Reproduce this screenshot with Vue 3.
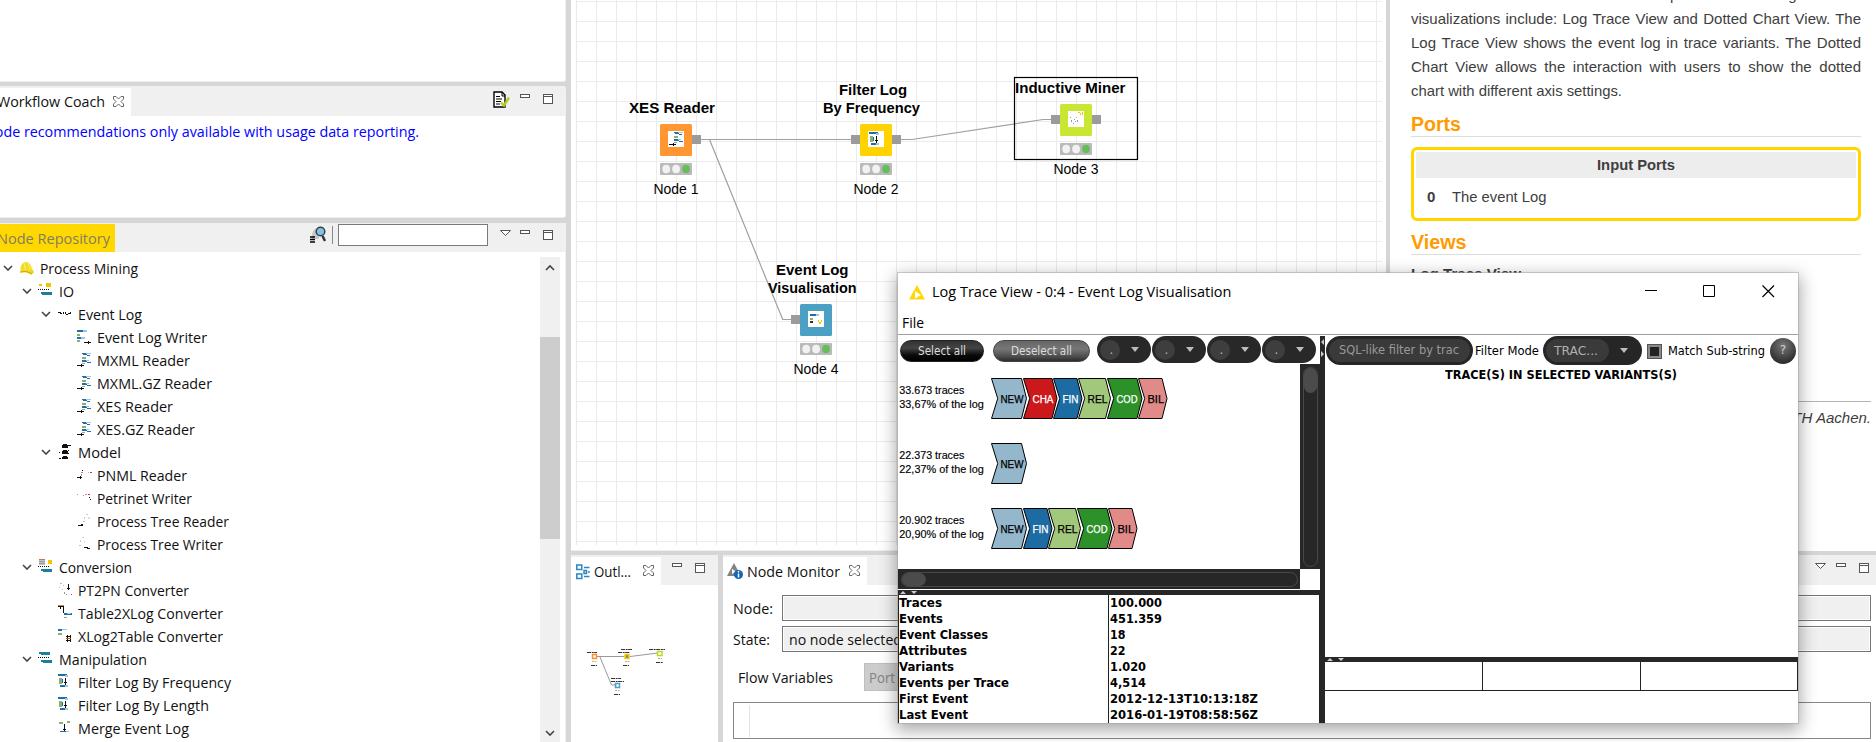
<script setup>
const vFit = {
  mounted(el, { value }) {
    const w = el.getBoundingClientRect().width
    if (!w) return
    el.style.transform = `scaleX(${value / w})`
    el.style.marginRight = `${value - w}px`
  },
}

const B = '#1f6ea8', L = '#9cc8e4', G = '#8fae72', K = '#111', T = '#1c7f9c', Y = '#f5c400', A = '#999', R = '#d33'
const shift = (list, dx, dy) => list.map(([x, y, w, h, c]) => [x + dx, y + dy, w, h, c])
const bars = [[0, 1, 9, 2, B], [6, 1, 4, 2, L], [0, 5, 3, 2, G], [0, 8, 4, 2, B], [4, 8, 4, 2, L], [0, 11, 3, 2, G]]
const arrowL = [[0, 13, 7, 1, K], [4, 12, 1, 3, K]]
const arrowR = [[7, 13, 7, 1, K], [11, 12, 1, 3, K]]
const reader = [[5, 1, 4, 1, B], [6, 2, 4, 1, B], [9, 1, 5, 1, L], [10, 3, 3, 1, B], [5, 5, 4, 2, G], [5, 8, 5, 2, B], [9, 8, 3, 1, L], [10, 10, 4, 1, B], [5, 11, 3, 1, G], ...arrowL]
const filter = [[0, 0, 9, 2, B], [7, 1, 3, 2, L], [1, 4, 3, 6, G], [4, 5, 1, 4, B], [7, 4, 1, 7, K], [6, 8, 3, 1, K], [2, 11, 5, 2, B], [7, 11, 3, 2, L]]
const icons = {
  io: [[1, 1, 3, 2, Y], [8, 0, 5, 4, Y], ...dots(6), [3, 9, 11, 2, T], [4, 11, 10, 1, T]],
  conv: [[1, 0, 6, 1, '#c87850'], [1, 1, 6, 5, '#c4c4c4'], [1, 2, 6, 1, A], [1, 4, 6, 1, A], [10, 1, 4, 4, Y], ...dots(7), [3, 10, 11, 2, T], [5, 12, 9, 1, T]],
  manip: [[1, 1, 11, 2, T], [3, 3, 9, 1, T], ...dots(6), [3, 9, 11, 2, T], [5, 11, 9, 1, T]],
  log: [[0, 6, 3, 1, K], [2, 7, 2, 1, K], [5, 6, 1, 2, K], [7, 6, 1, 2, K], [8, 8, 2, 1, K], [10, 7, 2, 1, K], [12, 6, 1, 2, K]],
  model: [[5, 0, 4, 1, K], [4, 1, 6, 3, K], [9, 1, 4, 1, K], [5, 6, 4, 1, K], [4, 7, 6, 3, K], [10, 6, 1, 1, K], [1, 8, 1, 1, K], [10, 9, 1, 1, K], [5, 12, 4, 1, K], [4, 13, 6, 2, K], [1, 14, 2, 1, K]],
  writer: [...bars, ...arrowR],
  reader,
  pnr: [[5, 3, 1, 1, K], [4, 5, 2, 1, A], [4, 7, 1, 2, A], [11, 5, 1, 1, '#9c9'], [13, 5, 2, 1, R], [0, 10, 5, 1, K], [3, 9, 1, 3, K]],
  pnw: [[0, 4, 1, 1, '#7c2'], [6, 5, 1, 1, '#8a6'], [8, 4, 2, 1, A], [11, 4, 2, 1, R], [12, 7, 1, 1, K], [13, 9, 1, 1, K]],
  ptr: [[9, 1, 2, 1, '#ccc'], [7, 4, 1, 2, '#ccc'], [11, 4, 2, 2, '#ddd'], [6, 8, 2, 1, '#bbb'], [1, 12, 5, 1, K], [4, 11, 2, 1, K]],
  ptw: [[5, 1, 2, 1, '#ccc'], [3, 4, 1, 2, '#ccc'], [7, 5, 1, 2, '#ddd'], [2, 9, 2, 1, '#bbb'], [7, 11, 4, 1, K], [10, 12, 3, 1, K]],
  pt2: [[2, 1, 2, 1, '#bbb'], [5, 3, 1, 1, '#bbb'], [1, 5, 1, 1, '#bbb'], [4, 7, 1, 1, '#bbb'], [10, 2, 1, 6, K], [9, 6, 3, 1, K], [6, 10, 1, 2, A], [8, 12, 1, 1, A], [13, 12, 1, 1, R]],
  t2x: [[0, 0, 6, 1, '#e0802a'], [0, 1, 6, 1, K], [2, 2, 1, 2, K], [5, 2, 1, 6, K], [6, 8, 8, 2, B], [9, 8, 4, 1, L], [6, 12, 3, 1, G]],
  x2t: [[0, 1, 4, 2, B], [4, 1, 5, 1, L], [0, 5, 4, 2, G], [9, 7, 1, 7, K], [12, 7, 1, 7, K], [8, 8, 5, 1, K], [8, 10, 5, 1, '#a60'], [8, 12, 5, 1, K]],
  filter,
  merge: [[1, 2, 4, 2, G], [9, 1, 3, 2, G], [6, 4, 1, 7, K], [5, 9, 3, 1, K], [2, 11, 6, 1, B], [8, 11, 3, 1, L]],
}
function dots(y) {
  return [0, 2, 4, 6, 8, 10].map((x) => [x, y, 1, 1, '#111'])
}
const tree = [
  [0, 1, 'hat', 'Process Mining', 98], [1, 1, 'io', 'IO', 15], [2, 1, 'log', 'Event Log', 64],
  [3, 0, 'writer', 'Event Log Writer', 110], [3, 0, 'reader', 'MXML Reader', 93], [3, 0, 'reader', 'MXML.GZ Reader', 115],
  [3, 0, 'reader', 'XES Reader', 76], [3, 0, 'reader', 'XES.GZ Reader', 98], [2, 1, 'model', 'Model', 43],
  [3, 0, 'pnr', 'PNML Reader', 90], [3, 0, 'pnw', 'Petrinet Writer', 95], [3, 0, 'ptr', 'Process Tree Reader', 132],
  [3, 0, 'ptw', 'Process Tree Writer', 126], [1, 1, 'conv', 'Conversion', 73], [2, 0, 'pt2', 'PT2PN Converter', 111],
  [2, 0, 't2x', 'Table2XLog Converter', 145], [2, 0, 'x2t', 'XLog2Table Converter', 145], [1, 1, 'manip', 'Manipulation', 88],
  [2, 0, 'filter', 'Filter Log By Frequency', 153], [2, 0, 'filter', 'Filter Log By Length', 131], [2, 0, 'merge', 'Merge Event Log', 111],
].map(([level, open, icon, label, w]) => ({ level, open, icon, label, w }))

const nodes = [
  { x: 660, y: 124, c: '#ff9632', in: false, out: true, name: 'Node 1', titles: [['XES Reader', 629, 113.3, 86]], art: shift(reader, 1, 0) },
  { x: 860, y: 124, c: '#ffd200', in: true, out: true, name: 'Node 2', titles: [['Filter Log', 839, 95.3, 68], ['By Frequency', 823, 113.3, 97]], art: shift(filter, 1, 1) },
  { x: 1060, y: 104, c: '#c8e632', in: true, out: true, name: 'Node 3', titles: [['Inductive Miner', 1015, 93.3, 110.5]], art: [[10, 1, 2, 1, Y], [12, 2, 1, 2, Y], [14, 1, 1, 3, Y], [2, 6, 1, 1, A], [8, 6, 1, 1, A], [3, 9, 1, 2, A], [6, 8, 1, 1, A], [9, 9, 1, 2, A], [5, 12, 1, 1, A], [7, 10, 1, 1, A]] },
  { x: 800, y: 304, c: '#4ba0c3', in: true, out: false, name: 'Node 4', titles: [['Event Log', 776, 275.3, 72.5], ['Visualisation', 768, 293.3, 88.5]], art: [[2, 3, 6, 2, B], [8, 3, 3, 2, L], [2, 7, 3, 2, G], [2, 10, 3, 2, '#333'], [10, 9, 1, 2, Y], [11, 11, 2, 2, Y], [13, 9, 1, 2, Y]] },
]

const C = {
  NEW: ['#94b7cc', '#000', 30, 22.5, 9], CHA: ['#cb181b', '#fff', 28.5, 20.5, 9], FIN: ['#1c6ba3', '#fff', 23.5, 15.5, 9],
  REL: ['#a1c87b', '#000', 27, 19.5, 9], COD: ['#2c9128', '#fff', 29.5, 20.5, 9], BIL: ['#e28a88', '#000', 23.5, 16, 9],
}
const variants = [
  ['33.673 traces', '33,67% of the log', 105.5, [['NEW', 0], ['CHA', 32], ['FIN', 62], ['REL', 87], ['COD', 116], ['BIL', 147]]],
  ['22.373 traces', '22,37% of the log', 170.5, [['NEW', 0]]],
  ['20.902 traces', '20,90% of the log', 235.5, [['NEW', 0], ['FIN', 32], ['REL', 57], ['COD', 86], ['BIL', 117]]],
].map(([a, b, y, chain]) => ({ a, b, y, chain: chain.map(([k, x]) => ({ k, x, d: C[k] })) }))

const stats = [
  ['Traces', 43, '100.000', 52], ['Events', 44, '451.359', 52], ['Event Classes', 89, '18', 15.5], ['Attributes', 68, '22', 15.5],
  ['Variants', 55, '1.020', 36], ['Events per Trace', 110, '4,514', 36], ['First Event', 69, '2012-12-13T10:13:18Z', 148], ['Last Event', 69, '2016-01-19T08:58:56Z', 148],
]
</script>

<template>
  <div class="screen">
    <div class="left">
      <div class="blank"></div>
      <section class="coach">
        <header class="bar">
          <div class="tab coachtab"><span v-fit="108" class="t">Workflow Coach</span>
            <svg class="x" width="11" height="11"><path d="M.5.5h2.5L5.5 3 8 .5h2.5V3L8 5.5 10.5 8v2.500H8L5.500 8 3 10.500H.5V8L3 5.500.5 3z" /></svg>
          </div>
          <div class="tools coachtools">
            <svg width="17" height="17"><path d="M1 1h8l3 3v12H1z" fill="#fff" stroke="#000" stroke-width="1.400" /><path d="M9 1v4h3M3 5.500h4M3 8h6M3 10.500h5M3 13h4" stroke="#000" fill="none" /><path d="M8 11.500l3 3 5-8" stroke="#b4cc28" stroke-width="2.400" fill="none" /></svg>
            <i class="min"></i><i class="max"></i>
          </div>
        </header>
        <p class="blue"><span v-fit="435" class="t">Node recommendations only available with usage data reporting.</span></p>
      </section>
      <section class="repo">
        <header class="bar repobar">
          <div class="ytab"><span v-fit="113" class="t">Node Repository</span></div>
          <div class="tools repotools">
            <svg width="16" height="17"><path d="M2 8Q4 1 9 2v11H2z" fill="#c8c8c8" /><circle cx="10.500" cy="5.500" r="4.300" fill="#8cc0d8" stroke="#28465a" stroke-width="1.500" /><path d="M12.500 10l2.500 5" stroke="#333" stroke-width="2.500" /><path d="M0 11h5M0 13.500h5M0 16h5" stroke="#000" stroke-width="1.400" /></svg>
            <i class="sep"></i><i class="input"></i>
            <svg class="dd" width="11" height="6"><path d="M.5.5h10L5.500 5.500z" /></svg>
            <i class="min"></i><i class="max"></i>
          </div>
        </header>
        <div class="treewrap">
          <div class="tree">
            <div v-for="r in tree" :key="r.label" class="row" :class="'lv' + r.level">
              <svg class="chev" width="10" height="6"><path v-if="r.open" d="M1 1l4 4 4-4" /></svg>
              <svg class="ic" width="16" height="16">
                <g v-if="r.icon === 'hat'"><path d="M1.500 11V8Q2.500 2 7 2t6 7l2.500 3-3 3q-6-4-11-2z" fill="#f0dc28" /><path d="M5 3l1.500 7M9 2.500l2 7" stroke="#fff07a" fill="none" /><path d="M1 12q6-2 12 1.500" stroke="#c8aa14" fill="none" /></g>
                <g v-else shape-rendering="crispEdges"><rect v-for="(p, i) in icons[r.icon]" :key="i" :x="p[0]" :y="p[1]" :width="p[2]" :height="p[3]" :fill="p[4]" /></g>
              </svg>
              <span v-fit="r.w" class="t">{{ r.label }}</span>
            </div>
          </div>
          <div class="scroll">
            <svg width="10" height="7"><path d="M1 6l4-4 4 4" /></svg>
            <i class="thumb"></i>
            <svg width="10" height="7"><path d="M1 1l4 4 4-4" /></svg>
          </div>
        </div>
      </section>
    </div>

    <div class="right">
      <div class="upper">
        <div class="editor">
          <svg class="canvas" width="815" height="551" viewBox="571 0 815 551">
            <defs><pattern id="grid" x="576" y="1" width="20" height="20" patternUnits="userSpaceOnUse"><path d="M.5 0v20M0 .5h20" stroke="#ebebeb" /></pattern></defs>
            <rect x="576" y="0" width="806" height="545" fill="url(#grid)" />
            <g fill="none" stroke="#a0a0a0" stroke-width="1.200">
              <path d="M701 139.500H851M709.500 139.500L782.700 319.500H791M901 139.500H912L1043 119.500H1051" />
            </g>
            <rect x="1014.500" y="77.500" width="123" height="82" fill="none" stroke="#000" stroke-width="1.200" />
            <g v-for="n in nodes" :key="n.name">
              <text v-for="t in n.titles" :key="t[0]" :x="t[1]" :y="t[2]" :textLength="t[3]" lengthAdjust="spacingAndGlyphs" class="nt">{{ t[0] }}</text>
              <rect :x="n.x" :y="n.y" width="32" height="32" rx="1.500" :fill="n.c" />
              <rect v-if="n.in" :x="n.x - 9" :y="n.y + 11" width="9" height="9" fill="#9b9b9b" />
              <rect v-if="n.out" :x="n.x + 32" :y="n.y + 11" width="9" height="9" fill="#9b9b9b" />
              <rect :x="n.x + 8" :y="n.y + 7" width="16" height="16" fill="#fff" />
              <g :transform="`translate(${n.x + 8} ${n.y + 7})`" shape-rendering="crispEdges"><rect v-for="(p, i) in n.art" :key="i" :x="p[0]" :y="p[1]" :width="p[2]" :height="p[3]" :fill="p[4]" /></g>
              <rect :x="n.x" :y="n.y + 39" width="32" height="12" rx="1" fill="#bababa" />
              <ellipse v-for="k in 3" :key="k" :cx="n.x - 3.700 + k * 9.900" :cy="n.y + 45" rx="3.900" ry="4.300" :fill="k === 3 ? '#64be5a' : '#f2f2f2'" />
              <text :x="n.x - 6.500" :y="n.y + 70" textLength="45" lengthAdjust="spacingAndGlyphs" class="nn">{{ n.name }}</text>
            </g>
          </svg>
        </div>
        <aside class="doc">
          <div class="cut"><span>p</span><span>g</span></div>
          <p class="para">visualizations include: Log Trace View and Dotted Chart View. The<br>Log Trace View shows the event log in trace variants. The Dotted<br>Chart View allows the interaction with users to show the dotted<br></p>
          <p class="lastline"><span v-fit="211">chart with different axis settings.</span></p>
          <h2><span v-fit="50">Ports</span></h2>
          <div class="ports"><div class="ph"><span v-fit="78">Input Ports</span></div><div class="pr"><b>0</b><span v-fit="94.5">The event Log</span></div></div>
          <h2 class="views"><span v-fit="55.5">Views</span></h2>
          <b class="ltv"><span v-fit="110">Log Trace View</span></b>
          <div class="foot">RWTH Aachen.</div>
        </aside>
      </div>

      <div class="lower">
        <section class="outline">
          <header class="bar b30">
            <div class="tab outtab">
              <svg width="14" height="16" fill="none" stroke="#2a86c0" stroke-width="1.500"><path d="M.8 1h5v4.500h-5zM.8 10h5v4.500h-5zM8 3.500h5.500M8 12.500h5.500M8 6.500h2.500v3H8zM12 8h2" /></svg>
              <span v-fit="37" class="t">Outl...</span>
              <svg class="x" width="11" height="11"><path d="M.5.5h2.5L5.500 3 8 .5h2.500V3L8 5.500 10.500 8v2.500H8L5.500 8 3 10.500H.5V8L3 5.500.5 3z" /></svg>
            </div>
            <div class="tools outtools"><i class="min"></i><i class="max"></i></div>
          </header>
          <svg class="mini" width="147" height="157" viewBox="571 585 147 157">
            <path d="M597 656.500H624M630 656.500L658 653M600 657l11.500 28h5" fill="none" stroke="#999" />
            <g fill="none" stroke-width="1.500"><rect x="592.500" y="654.500" width="4" height="4" stroke="#ff8c28" /><rect x="625" y="654.500" width="4" height="4" stroke="#ffc800" fill="#5a96a0" /><rect x="657.500" y="651.500" width="4.500" height="4" stroke="#b4dc1e" /><rect x="615.500" y="683.500" width="4" height="4" stroke="#4ba0c3" /></g>
            <g stroke="#333" fill="none" stroke-dasharray="4 .7 2 .5"><path d="M587 652.500h10M621 649.500h11M618 652.500h12M649 649.500h16M611 678.500h10M611 681.500h13M591 665.500h6M623 665.500h6M656 662.500h7M614 694.500h6" /></g>
            <g stroke="#a8c098" fill="none" stroke-dasharray="2 .6"><path d="M592 661.500h5M625 661.500h5M658 658.500h4M615 690.500h5" /></g>
          </svg>
        </section>
        <section class="monitor">
          <header class="bar b30">
            <div class="tab montab">
              <svg width="17" height="17"><path d="M0 13L7 0l7 13z" fill="#828282" /><path d="M5 11V6l4 2.500z" fill="#fff" /><circle cx="11.500" cy="11.500" r="4.500" fill="#1464b4" /><path d="M11.500 10.500v4M11.500 8v1.400" stroke="#fff" stroke-width="1.500" /></svg>
              <span v-fit="93" class="t">Node Monitor</span>
              <svg class="x" width="11" height="11"><path d="M.5.5h2.500L5.500 3 8 .5h2.500V3L8 5.500 10.500 8v2.500H8L5.500 8 3 10.500H.5V8L3 5.500.5 3z" /></svg>
            </div>
            <div class="tools montools"><svg class="dd" width="11" height="6"><path d="M.5.5h10L5.500 5.500z" /></svg><i class="min"></i><i class="max"></i></div>
          </header>
          <div class="field"><label><span v-fit="40">Node:</span></label><div class="val"></div></div>
          <div class="field f2"><label><span v-fit="37">State:</span></label><div class="val"><span v-fit="113">no node selected</span></div></div>
          <div class="flow"><span v-fit="95">Flow Variables</span><div class="port"><span v-fit="26">Port</span></div></div>
          <div class="outbox"><i></i></div>
        </section>
      </div>
    </div>

    <div class="dialog">
      <header class="title">
        <svg width="16" height="15"><path d="M8 0l8 14.500H0z" fill="#ffd800" /><path d="M6 6l6 4-6 3.500z" fill="#fff" /></svg>
        <span v-fit="299.5" class="t">Log Trace View - 0:4 - Event Log Visualisation</span>
        <svg class="ctl" width="130" height="13" fill="none" stroke="#000"><path d="M0 5.500h12M58.500.5h11v11h-11z" /><path d="M117.500.5l11.500 11.500M129 .5L117.500 12" stroke-width="1.200" /></svg>
      </header>
      <div class="menu"><span v-fit="22">File</span></div>
      <div class="body">
        <div class="lcol">
          <div class="tb">
            <div class="btn dark"><span v-fit="48">Select all</span></div>
            <div class="btn grey"><span v-fit="61">Deselect all</span></div>
            <div class="combos"><div v-for="k in 4" :key="k" class="combo"><i class="knob">.</i><i class="tri"></i></div></div>
          </div>
          <div class="variants">
            <svg width="402" height="205" viewBox="898 364 402 205">
              <g v-for="v in variants" :key="v.a" :transform="`translate(0 ${v.y - 105.5})`">
                <text x="899.300" y="393.700" textLength="65" lengthAdjust="spacingAndGlyphs" class="vt">{{ v.a }}</text>
                <text x="899.300" y="407.700" textLength="84.500" lengthAdjust="spacingAndGlyphs" class="vt">{{ v.b }}</text>
                <g v-for="c in v.chain" :key="c.k" :transform="`translate(${991.5 + c.x} 378.5)`">
                  <path :d="`M0 0H${c.d[2]}L${c.d[2] + 5} 20L${c.d[2]} 40H0L6.200 20Z`" :fill="c.d[0]" stroke="#000" />
                  <text :x="c.d[4]" y="24" :textLength="c.d[3] + 0.5" lengthAdjust="spacingAndGlyphs" class="ct" :fill="c.d[1]" :stroke="c.d[1]">{{ c.k }}</text>
                </g>
              </g>
            </svg>
            <div class="vs"><i><b></b></i></div>
          </div>
          <div class="hs"><div><i><b></b></i></div></div>
          <div class="split"><svg width="20" height="5"><path d="M2 4l3-3 3 3zM13 1l3 3 3-3z" fill="#ccc" /></svg></div>
          <div class="stats">
            <div v-for="s in stats" :key="s[0]" class="sr"><div><span v-fit="s[1]">{{ s[0] }}</span></div><div><span v-fit="s[3]">{{ s[2] }}</span></div></div>
          </div>
        </div>
        <div class="vsplit"><svg width="5" height="22"><path d="M4 3v6L1 6zM1 15v6l3-3z" fill="#ccc" /></svg></div>
        <div class="rcol">
          <div class="rtb">
            <div class="sql"><span v-fit="120">SQL-like filter by trac</span></div>
            <span v-fit="64" class="lab">Filter Mode</span>
            <div class="mode"><div><span v-fit="44">TRAC...</span></div><i class="tri"></i></div>
            <i class="chk"></i>
            <span v-fit="97" class="lab l2">Match Sub-string</span>
            <div class="q">?</div>
          </div>
          <div class="rt"><span v-fit="232">TRACE(S) IN SELECTED VARIANTS(S)</span></div>
          <div class="grow"></div>
          <div class="split"><svg width="20" height="5"><path d="M2 4l3-3 3 3zM13 1l3 3 3-3z" fill="#ccc" /></svg></div>
          <div class="cells"><i></i><i></i><i></i></div>
          <div class="tail"></div>
        </div>
      </div>
    </div>
  </div>
</template>

<style>
body { overflow: hidden; }
</style>
<style scoped>
* { box-sizing: border-box; }
.screen { position: relative; width: 1876px; height: 742px; overflow: hidden; display: flex; gap: 5px; background: #d6d6d6; font: 15px/20px "Open Sans", "Noto Sans", sans-serif; color: #111; }
span { display: inline-block; white-space: nowrap; transform-origin: 0 50%; flex: none; }
.t { margin-top: -2px; }
i { display: block; font-style: normal; flex: none; }
svg { display: block; flex: none; }
p, h2 { margin: 0; }
.left { width: 566px; display: flex; flex-direction: column; gap: 4px; flex: none; }
.left > * { border-right: 1px solid #f0f0f0; }
.blank { height: 82px; background: #fff; border-bottom: 1px solid #eee; border-radius: 0 0 3px 0; }
.coach { height: 132px; background: #fff; border-bottom: 1px solid #eee; border-radius: 0 3px 3px 0; overflow: hidden; }
.bar { background: #f0f0f0; height: 30px; display: flex; justify-content: space-between; padding-top: 2px; }
.tab { background: #fff; display: flex; align-items: center; }
.x path { fill: #fff; stroke: #666; stroke-width: 1; }
.coachtab { width: 131px; padding-left: 0; gap: 8px; }
.coachtab .x { margin-top: -1px; }
.coachtab span, .ytab span { margin-left: -3px; }
.tools { display: flex; align-items: flex-start; }
.min { width: 10px; height: 4px; border: 1px solid #555; background: #fff; margin-left: 10px; }
.max { width: 10px; height: 10px; border: 1px solid #555; border-top-width: 1px; background: linear-gradient(#fff 1px, #555 1px 2px, #fff 2px); margin-left: 13px; }
.dd path { fill: #fff; stroke: #555; }
.coachtools { padding: 3px 12px 0 0; }
.coachtools .min, .coachtools .max { margin-top: 3px; }
.blue { color: #00f; padding-top: 5px; margin-left: -16px; }
.blue .t { margin-top: 0; }
.repo { flex: 1; background: #fff; margin-top: 1px; }
.repobar { height: 29px; padding-top: 1px; }
.ytab { background: #ffd800; color: #857c64; width: 115px; height: 28px; display: flex; align-items: center; padding-top: 2px; }
.repotools { padding: 0 12px 0 0; }
.repotools > svg:first-child { margin-top: 2px; }
.sep { width: 1px; height: 18px; background: #888; margin: 2px 5px 0 6px; }
.input { width: 150px; height: 22px; border: 1px solid #7a7a7a; background: #fff; margin-right: 12px; }
.repotools .dd, .repotools .min, .repotools .max { margin-top: 6px; }
.repotools .dd { margin-right: -1px; }
.treewrap { display: flex; justify-content: space-between; padding-top: 5px; height: 490px; }
.row { height: 23px; display: flex; align-items: center; }
.row .ic, .row .chev { margin-top: -1px; }
.lv0 { padding-left: 3px; } .lv1 { padding-left: 22px; } .lv2 { padding-left: 41px; } .lv3 { padding-left: 60px; }
.chev { margin-right: 6px; } .ic { margin-right: 5px; }
.lv3 .ic, .lv2 .ic { margin-left: 1px; margin-right: 4px; }
.chev path, .scroll path { fill: none; stroke: #444; stroke-width: 1.6; }
.scroll { width: 20px; margin-right: 5px; background: #f0f0f0; display: flex; flex-direction: column; align-items: center; justify-content: space-between; padding: 7px 0 5px; }
.thumb { width: 20px; height: 202px; background: #cdcdcd; margin-top: -126px; }

.right { flex: 1; display: flex; flex-direction: column; gap: 4px; min-width: 0; }
.upper { display: flex; gap: 4px; height: 551px; }
.editor { width: 815px; background: #fff; border-bottom: 1px solid #eee; overflow: hidden; }
.nt { font: bold 15px "Liberation Sans", sans-serif; fill: #000; }
.nn { font: 15px "Liberation Sans", sans-serif; fill: #000; }
.doc { flex: 1; background: #fff; padding-left: 21px; font: 15px/24px "Liberation Sans", Arial, sans-serif; color: #3e3e3e; }
.doc > * { width: 450px; }
.cut { height: 6px; line-height: 8px; padding-left: 259px; display: flex; gap: 110px; align-items: flex-start; }
.cut span { margin-top: -9.500px; }
.para { text-align: justify; text-align-last: justify; margin-top: 1px; }
.lastline { height: 24px; }
.doc h2 { font: bold 20px/24px "Liberation Sans", Arial, sans-serif; color: #ff9b00; border-bottom: 1px solid #ddd; margin-top: 9px; height: 25px; }
.ports { margin-top: 10px; height: 74px; border: 3px solid #ffd500; border-radius: 6px; padding: 2px; }
.ph { height: 26px; background: #ededed; text-align: center; font-weight: bold; line-height: 26px; }
.pr { padding: 7px 0 0 11px; display: flex; gap: 17px; }
.ltv { display: block; line-height: 20px; margin-top: 9px; }
.foot { border-top: 1px solid #b4b4b4; width: 460px !important; margin-top: 117px; text-align: right; font-style: italic; padding-top: 4px; }

.lower { flex: 1; display: flex; gap: 5px; }
.outline { width: 147px; background: #fff; overflow: hidden; }
.b30 { height: 30px; }
.outtab { width: 90px; padding-left: 5px; padding-top: 1px; }
.outtab .t { margin-left: 4px; } .outtab .x { margin-left: 12px; margin-top: -2px; }
.outtools { padding: 6px 13px 0 0; }
.monitor { flex: 1; background: #fff; overflow: hidden; }
.montab { width: 144px; padding-left: 4px; padding-top: 1px; }
.montab .t { margin-left: 3px; } .montab .x { margin-left: 9px; margin-top: -2px; }
.montools { padding: 6px 7px 0 0; }
.field { display: flex; height: 26px; margin: 10px 5px 0 10px; align-items: center; }
.f2 { margin-top: 5px; }
.field label { width: 49px; }
.val { flex: 1; height: 26px; border: 1px solid #767676; background: #f0f0f0; box-shadow: inset 0 0 0 1px #fff; padding: 2px 0 0 6px; }
.flow { display: flex; align-items: center; margin: 11px 0 0 15px; height: 28px; }
.port { margin-left: 31px; width: 60px; height: 28px; background: #ccc; border: 1px solid #bfbfbf; color: #838383; padding: 3px 0 0 4px; }
.outbox { margin: 11px 5px 0 10px; height: 37px; border: 1px solid #828790; padding: 2px 0 0 15px; }
.outbox i { width: 1px; height: 32px; background: #e2e2e2; }

.dialog { position: absolute; left: 898px; top: 273px; width: 900px; height: 450px; background: #fff; box-shadow: 0 0 0 1px rgba(160, 160, 160, .5), 0 5px 16px 2px rgba(0, 0, 0, .35); display: flex; flex-direction: column; color: #000; }
.title { height: 37px; display: flex; align-items: center; padding: 1px 23px 0 11px; }
.title .t { margin-left: 6.500px; } .title .ctl { margin-left: auto; margin-top: -1px; }
.menu { height: 25px; border-bottom: 1px solid #a0a0a0; padding: 2px 0 0 4px; }
.body { flex: 1; display: flex; padding-top: 1px; font: 13px/16px "DejaVu Sans", "Noto Sans", sans-serif; min-height: 0; }
.lcol { width: 422px; display: flex; flex-direction: column; flex: none; }
.tb { height: 28px; display: flex; align-items: flex-start; padding-left: 2px; }
.btn { height: 22px; border-radius: 11px; margin-top: 4px; color: #dcdcdc; display: flex; align-items: center; justify-content: center; font-size: 12px; }
.dark { width: 84px; background: linear-gradient(#333 0, #444 35%, #0a0a0a 70%, #000); border: 1px solid #222; }
.grey { width: 97px; margin-left: 9px; background: linear-gradient(#666, #777 40%, #4a4a4a 80%, #2c2c2c); border: 1px solid #444; }
.combos { display: flex; gap: 1px; margin-left: 7px; }
.combo { width: 54px; height: 27px; border-radius: 14px; background: #282828; display: flex; align-items: center; padding: 0 12px 0 3px; justify-content: space-between; }
.knob { width: 20px; height: 20px; border-radius: 10px; background: #3e3e3e; color: #bbb; line-height: 21px; text-align: center; font-size: 12px; padding-left: 3px; }
.tri { border: 4px solid transparent; border-top: 5px solid #bdbdbd; border-bottom: 0; width: 0; height: 0; }
.variants { height: 205px; display: flex; }
.vt { font: 10px "Liberation Sans", Arial, sans-serif; stroke: #000; stroke-width: .15px; }
.ct { font: 10px "Liberation Sans", Arial, sans-serif; stroke-width: .25px; }
.vs { width: 20px; background: #272727; padding: 3px 2px 2px 3px; }
.vs i { height: 200px; border: 1px solid #484848; border-radius: 8px; }
.vs b { display: block; height: 25px; border-radius: 7px; background: #4b4b4b; }
.hs { height: 21px; }
.hs div { width: 402px; height: 20px; background: #272727; padding: 3px 2px 2px 3px; }
.hs i { height: 15px; border: 1px solid #484848; border-radius: 8px; }
.hs b { display: block; width: 24px; height: 13px; border-radius: 7px; background: #4b4b4b; }
.split { height: 5px; background: #272727; flex: none; }
.stats { flex: 1; border-left: 1px solid #222; border-right: 1px solid #222; font-weight: bold; font-size: 12.5px; overflow: hidden; }
.sr { display: flex; height: 16px; }
.sr div { flex: none; }
.sr div:first-child { width: 210px; border-right: 1px solid #222; }
.sr div:first-child span { margin-left: -.5px; }
.sr div:last-child { padding-left: 1px; }
.vsplit { width: 5px; background: #272727; flex: none; }
.rcol { flex: 1; display: flex; flex-direction: column; min-width: 0; }
.rtb { height: 29px; display: flex; align-items: center; font-size: 12px; padding-left: 1px; flex: none; }
.sql { width: 147px; height: 29px; border-radius: 15px; border: 3px solid #262626; background: #3a3a3a; color: #999; padding: 3px 0 0 10px; }
.lab { color: #000; margin-left: 2px; padding-top: 1px; }
.mode { width: 99px; height: 29px; border-radius: 15px; background: #262626; margin-left: 4px; padding: 3px 14px 0 3px; display: flex; justify-content: space-between; color: #b0b0b0; }
.mode div { width: 63px; height: 23px; border-radius: 12px; background: #3a3a3a; padding: 4px 0 0 8px; }
.mode .tri { margin-top: 9px; }
.chk { width: 15px; height: 15px; background: #222; border: 3px solid #8a8a8a; outline: 1px solid #555; outline-offset: -1px; margin: 1px 5px 0 5px; }
.l2 { margin-left: 1px; }
.q { width: 26px; height: 26px; border-radius: 13px; margin-left: 5px; background: radial-gradient(circle at 50% 30%, #777, #333 70%, #222); color: #ccc; text-align: center; line-height: 25px; font-size: 12px; }
.rt { height: 20px; padding-left: 120px; font-weight: bold; font-size: 12px; padding-top: 2px; }
.grow { flex: 1; }
.cells { height: 29px; display: flex; border-bottom: 1px solid #222; flex: none; }
.cells i { width: 158px; border-right: 1px solid #222; }
.cells i:last-child { width: 157px; }
.tail { height: 32px; flex: none; }
</style>
